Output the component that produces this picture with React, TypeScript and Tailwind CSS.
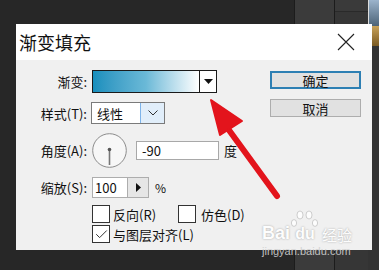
import { Check } from 'lucide-react';

const cjk = "font-['Noto_Sans_CJK_SC','Microsoft_YaHei',sans-serif]";

function Label({ text }: { text: string }) {
    return <div className="w-[72px] pr-[1px] text-right text-[13px] leading-none text-[#111]">{text}</div>;
}

function Box({ checked = false }: { checked?: boolean }) {
    return (
        <div className="w-[18px] h-[18px] border border-[#333] bg-white flex items-center justify-center">
            {checked && <Check className="w-[15px] h-[15px] text-[#333]" strokeWidth={1.6} />}
        </div>
    );
}

export default function App() {
    return (
        <div className={`relative w-[379px] h-[270px] overflow-hidden bg-[#262626] flex ${cjk}`}>
            {/* backdrop: editor panels behind the dialog */}
            <div className="flex-1 bg-[#272727]" />
            <div className="w-[41px] bg-[#3b3b3b] border-x border-[#1c1c1c]" />
            <div className="w-[33px] flex flex-col bg-[#363636]">
                <div className="h-[12px] border-b border-[#2a2a2a] bg-[#3a3a3a]" />
                <div className="flex-1" />
            </div>
            <div className="w-[11px] flex flex-col">
                <div className="h-[26px] bg-gradient-to-b from-[#9cb4cc] to-[#4d6478] border-l border-[#ddd]" />
                <div className="h-[20px] bg-gradient-to-b from-[#c9a35a] to-[#7a5a22]" />
                <div className="flex-1 bg-[#333]" />
            </div>

            {/* dialog */}
            <div className="absolute left-[16px] top-[24px] w-[356px] h-[226px] flex flex-col bg-[#f0f0f0]">
                <div className="h-[36px] bg-white flex items-center justify-between pl-[3px] pr-[17px]">
                    <span className="text-[18px] leading-none text-[#111]">渐变填充</span>
                    <svg width="18" height="18" viewBox="0 0 18 18">
                        <path d="M1 1 L17 17 M17 1 L1 17" stroke="#222" strokeWidth="1.1" />
                    </svg>
                </div>

                <div className="flex-1 flex pt-[10px]">
                    <div className="flex flex-col">
                        <div className="h-[23px] flex items-center gap-[4px]">
                            <Label text="渐变:" />
                            <div className="w-[125px] h-[23px] border border-[#1a1a1a] flex">
                                <div className="flex-1 bg-gradient-to-r from-[#158fbd] via-[#6ab9d7] to-white" />
                                <div className="w-[17px] border-l border-[#1a1a1a] bg-white flex items-center justify-center">
                                    <svg width="9" height="5" viewBox="0 0 9 5">
                                        <path d="M0 0 H9 L4.5 5 Z" fill="#111" />
                                    </svg>
                                </div>
                            </div>
                        </div>

                        <div className="mt-[9px] h-[22px] flex items-center gap-[3px]">
                            <Label text="样式(T):" />
                            <div className="w-[74px] h-[22px] border border-[#7a7a7a] flex bg-white">
                                <div className="flex-1 pl-[5px] flex items-center text-[13px] leading-none text-[#111]">线性</div>
                                <div className="w-[24px] bg-[#e1eefa] border-l border-[#7eb4ea] flex items-center justify-center">
                                    <svg width="10" height="6" viewBox="0 0 10 6">
                                        <path d="M0.5 0.5 L5 5 L9.5 0.5" stroke="#333" strokeWidth="1" fill="none" />
                                    </svg>
                                </div>
                            </div>
                        </div>

                        <div className="mt-[9px] h-[34px] flex items-center gap-[4px]">
                            <Label text="角度(A):" />
                            <svg width="35" height="35" viewBox="0 0 35 35">
                                <circle cx="17.5" cy="17.5" r="16.8" fill="#f7f7f7" stroke="#8c8c8c" strokeWidth="1" />
                                <line x1="17.5" y1="17" x2="17.5" y2="32" stroke="#777" strokeWidth="1.6" />
                                <circle cx="17.5" cy="16.5" r="1.8" fill="#555" />
                            </svg>
                            <div className="ml-[5px] w-[83px] h-[19px] border border-[#a8a8a8] bg-white pl-[5px] flex items-center text-[13px] leading-none text-[#111]">-90</div>
                            <span className="ml-[1px] text-[13px] leading-none text-[#111]">度</span>
                        </div>

                        <div className="mt-[10px] h-[21px] flex items-center gap-[4px]">
                            <Label text="缩放(S):" />
                            <div className="w-[57px] h-[21px] border border-[#adadad] bg-white flex">
                                <div className="flex-1 pl-[2px] flex items-center text-[13px] leading-none text-[#111]">100</div>
                                <div className="w-[21px] bg-[#e6e6e6] border-l border-[#adadad] flex items-center justify-center">
                                    <svg width="5" height="9" viewBox="0 0 5 9">
                                        <path d="M0 0 L5 4.5 L0 9 Z" fill="#111" />
                                    </svg>
                                </div>
                            </div>
                            <span className="ml-[2px] text-[12px] leading-none text-[#111]">%</span>
                        </div>

                        <div className="mt-[7px] h-[18px] flex items-center pl-[76px] text-[13px] leading-none text-[#111]">
                            <Box />
                            <span className="ml-[3px] w-[65px]">反向(R)</span>
                            <Box />
                            <span className="ml-[5px]">仿色(D)</span>
                        </div>

                        <div className="mt-[2px] h-[18px] flex items-center pl-[76px] text-[13px] leading-none text-[#111]">
                            <Box checked />
                            <span className="ml-[3px]">与图层对齐(L)</span>
                        </div>
                    </div>

                    <div className="ml-auto mr-[11px] pt-[1px] flex flex-col gap-[10px]">
                        <div className="w-[91px] h-[18px] border-2 border-[#2d7fb3] bg-[#e1e1e1] flex items-center justify-center text-[13px] leading-none text-[#111]">确定</div>
                        <div className="w-[91px] h-[18px] border border-[#adadad] bg-[#e1e1e1] flex items-center justify-center text-[13px] leading-none text-[#111]">取消</div>
                    </div>
                </div>
            </div>

            {/* red arrow annotation */}
            <svg className="absolute left-0 top-0" width="379" height="270" viewBox="0 0 379 270">
                <line x1="277" y1="196" x2="226" y2="126" stroke="#e3141c" strokeWidth="6" strokeLinecap="round" />
                <path d="M211 100 L220 135 L242 121 Z" fill="#e3141c" stroke="#e3141c" strokeWidth="2" strokeLinejoin="round" />
            </svg>

            {/* watermark */}
            <div className="absolute left-[262px] top-[210px] flex flex-col items-start opacity-90">
                <div className="flex items-end">
                    <span className="font-['Liberation_Sans',sans-serif] text-[18px] font-bold leading-none text-white [text-shadow:0_0_2px_#999]">Bai</span>
                    <div className="relative w-[30px] h-[32px] flex items-end justify-center">
                        <svg className="absolute left-[1px] top-0" width="28" height="20" viewBox="0 0 28 20">
                            <ellipse cx="9" cy="5" rx="3" ry="4" fill="white" stroke="#aaa" strokeWidth="0.6" />
                            <ellipse cx="18" cy="5" rx="3" ry="4" fill="white" stroke="#aaa" strokeWidth="0.6" />
                            <ellipse cx="3" cy="13" rx="2.6" ry="3.4" fill="white" stroke="#aaa" strokeWidth="0.6" />
                            <ellipse cx="24" cy="13" rx="2.6" ry="3.4" fill="white" stroke="#aaa" strokeWidth="0.6" />
                        </svg>
                        <span className="font-['Liberation_Sans',sans-serif] text-[16px] font-bold leading-none text-white [text-shadow:0_0_2px_#999]">du</span>
                    </div>
                    <span className="ml-[2px] text-[15px] leading-none text-white [text-shadow:0_0_2px_#999]">经验</span>
                </div>
                <span className="mt-[4px] font-['Liberation_Sans',sans-serif] text-[11px] leading-none text-[#d0d0d0]">jingyan.baidu.com</span>
            </div>
        </div>
    );
}
